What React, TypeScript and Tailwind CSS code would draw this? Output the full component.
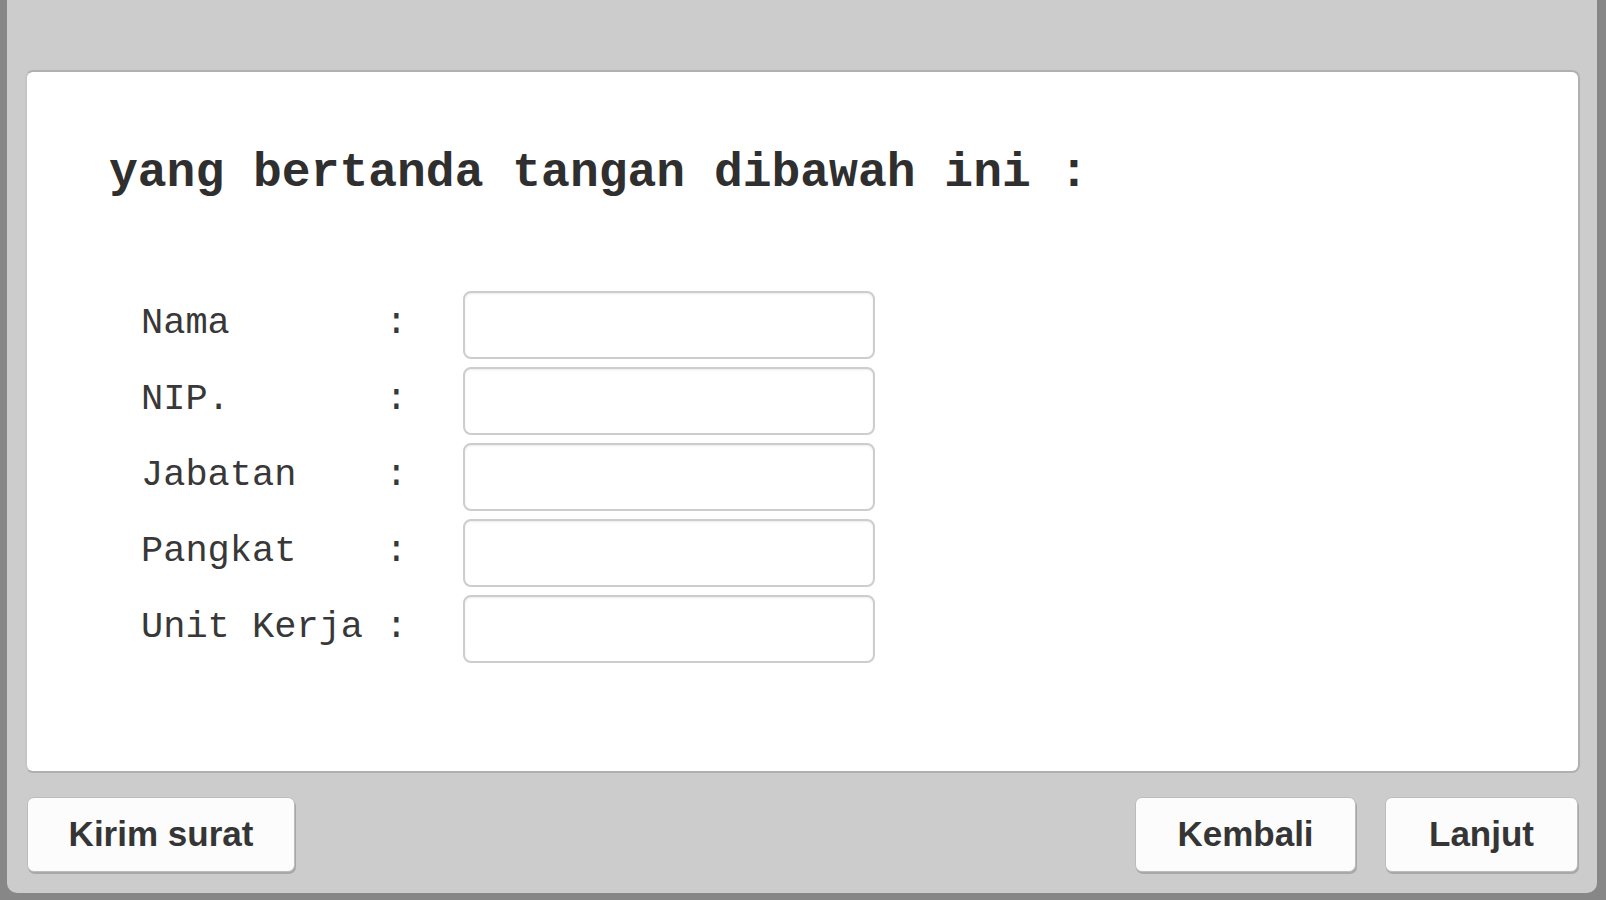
import React from 'react';

const fields = ['Nama       :', 'NIP.       :', 'Jabatan    :', 'Pangkat    :', 'Unit Kerja :'];

const FieldRow: React.FC<{ label: string }> = ({ label }) => (
  <div className="flex items-center h-[68px]">
    <span className="w-[322px] whitespace-pre text-[37px] leading-none text-[#383838] pb-[4px] font-['Courier_New','Liberation_Mono',monospace]">
      {label}
    </span>
    <input
      type="text"
      className="w-[412px] h-[68px] rounded-[8px] border-2 border-[#cdcdcd] bg-white outline-none shadow-[inset_0_1px_2px_rgba(0,0,0,0.08)]"
    />
  </div>
);

const App: React.FC = () => {
  return (
    <div className="w-full h-[900px] bg-[#878787] pl-[7px] pr-[9px] pb-[7px] overflow-hidden">
      <div className="h-full bg-[#cccccc] rounded-b-[10px] flex flex-col">
        {/* main panel */}
        <div className="mt-[70px] ml-[18px] mr-[17px] h-[703px] bg-white rounded-[8px] border-2 border-[#b0b0b0] border-l-[#c6c6c6] pl-[82px] pt-[71px]">
          <h1 className="text-[48px] leading-[60px] font-bold text-[#2f2f2f] whitespace-pre font-['Courier_New','Liberation_Mono',monospace]">
            yang bertanda tangan dibawah ini :
          </h1>
          <div className="mt-[88px] ml-[32px] flex flex-col gap-[8px]">
            {fields.map((f) => (
              <FieldRow key={f} label={f} />
            ))}
          </div>
        </div>

        {/* footer buttons */}
        <div className="mt-[24px] flex items-center pl-[20px] pr-[19px] font-['Liberation_Sans',Arial,sans-serif]">
          <button className="w-[268px] h-[75px] bg-[#fcfcfc] rounded-[7px] border border-[#bcbcbc] shadow-[1px_2px_0_#a8a8a8] text-[35px] font-bold text-[#353535]">
            Kirim surat
          </button>
          <div className="ml-auto flex gap-[29px]">
            <button className="w-[221px] h-[75px] bg-[#fcfcfc] rounded-[7px] border border-[#bcbcbc] shadow-[1px_2px_0_#a8a8a8] text-[35px] font-bold text-[#353535]">
              Kembali
            </button>
            <button className="w-[193px] h-[75px] bg-[#fcfcfc] rounded-[7px] border border-[#bcbcbc] shadow-[1px_2px_0_#a8a8a8] text-[35px] font-bold text-[#353535]">
              Lanjut
            </button>
          </div>
        </div>
      </div>
    </div>
  );
};

export default App;
